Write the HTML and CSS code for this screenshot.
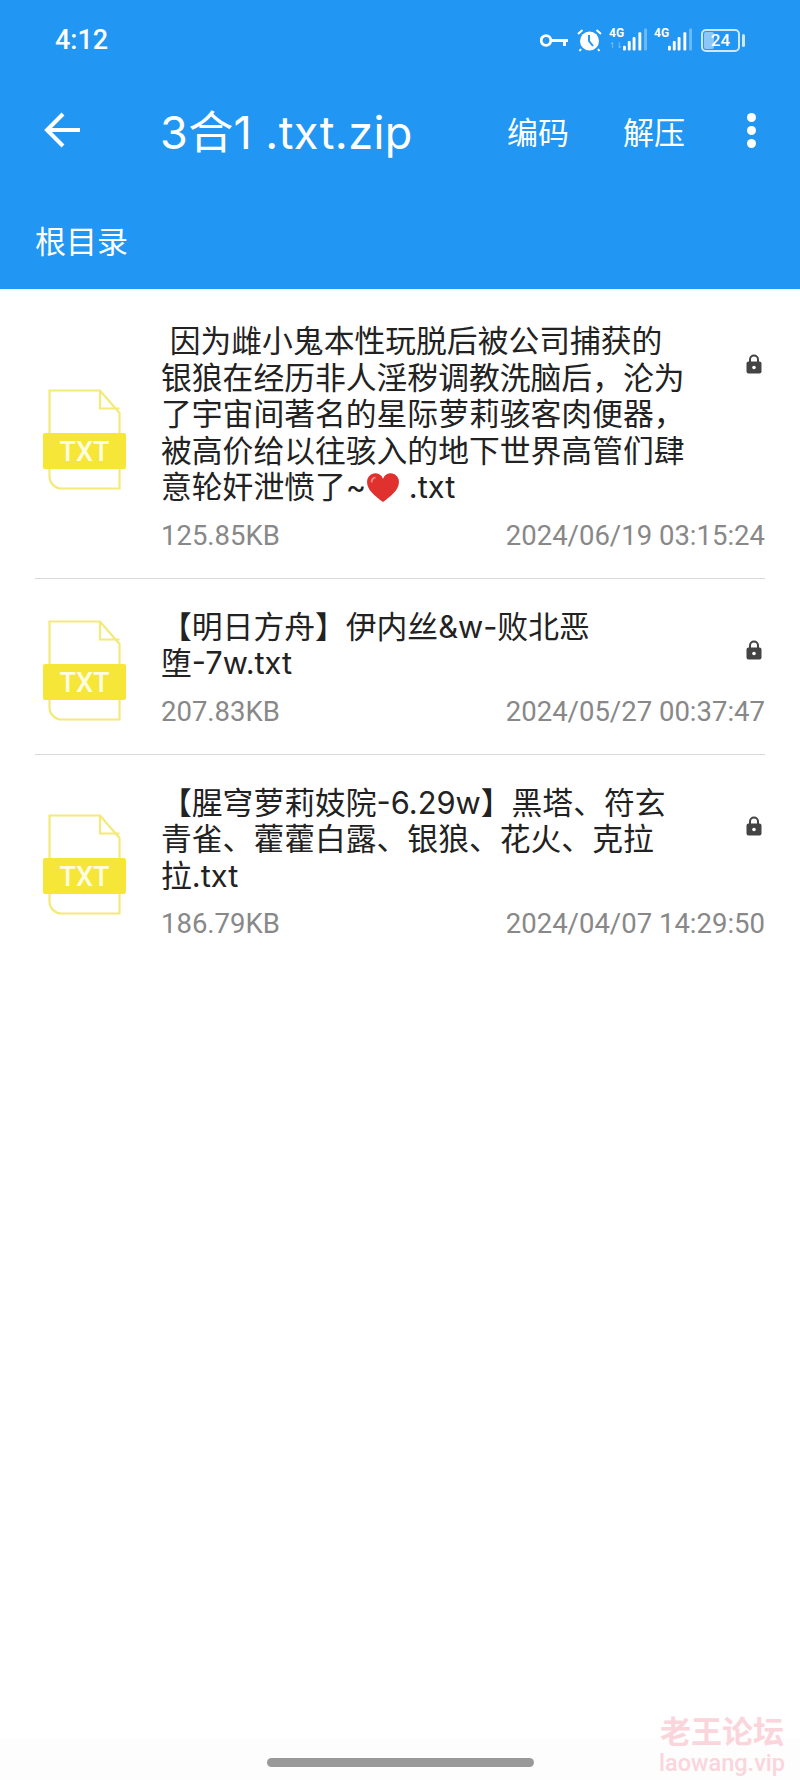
FILE: index.html
```html
<!DOCTYPE html>
<html lang="zh-CN">
<head>
    <meta charset="UTF-8">
    <meta name="viewport" content="width=device-width, initial-scale=1.0">
    <title>3合1 .txt.zip</title>
    <link rel="stylesheet" href="styles.css">
</head>
<body>
    <svg class="defs" width="0" height="0">
        <symbol id="file-txt" viewBox="0 0 83 101">
            <path d="M57 1.500H6.500V88a12 12 0 0 0 12 11.500H76.500V24L57 1.500Z" fill="none" stroke="#f3ea7a" stroke-width="2.200"/>
            <path d="M57 1.500V19.500H76.500" fill="none" stroke="#f3ea7a" stroke-width="2.200"/>
            <rect y="44" width="83" height="36" rx="2" fill="#f5e637"/>
        </symbol>
        <symbol id="lock" viewBox="0 0 16 20">
            <path d="M4 8V5.500a4 4 0 0 1 8 0V8" fill="none" stroke="#444" stroke-width="2"/>
            <rect x="0.500" y="7.500" width="15" height="12" rx="2" fill="#444"/>
            <circle cx="8" cy="13.500" r="1.800" fill="#fff"/>
        </symbol>
        <symbol id="signal" viewBox="0 0 26 23">
            <rect x="0" y="18" width="3" height="5" rx="1" fill="#fff"/>
            <rect x="5" y="13" width="3" height="10" rx="1" fill="#fff"/>
            <rect x="10" y="9" width="3" height="14" rx="1" fill="#fff"/>
            <rect x="16" y="4" width="3" height="19" rx="1" fill="#fff"/>
            <rect x="22" y="0" width="3" height="23" rx="1" fill="#fff" opacity="0.35"/>
        </symbol>
    </svg>

    <div class="screen">
        <header class="header">
            <div class="status-bar">
                <span class="clock">4:12</span>
                <div class="status-icons">
                    <svg class="icon-key" viewBox="0 0 28 13">
                        <circle cx="6" cy="6.500" r="4.800" fill="none" stroke="#fff" stroke-width="2.800"/>
                        <path d="M11 5H28V8H26V12H23V8H11Z" fill="#fff"/>
                    </svg>
                    <svg class="icon-alarm" viewBox="0 0 25 23">
                        <circle cx="12.500" cy="12" r="9.500" fill="#fff"/>
                        <path d="M12 6V12L16 17" fill="none" stroke="#2196f3" stroke-width="2"/>
                        <path d="M1 5L5.500 1M24 5L19.500 1M4 20L2.500 22M21 20L22.500 22" stroke="#fff" stroke-width="2"/>
                    </svg>
                    <div class="net">
                        <span class="net-label">4G</span>
                        <span class="net-arrows">↿⇂</span>
                        <svg class="net-bars"><use href="#signal"/></svg>
                    </div>
                    <div class="net net-second">
                        <span class="net-label">4G</span>
                        <svg class="net-bars"><use href="#signal"/></svg>
                    </div>
                    <div class="battery">
                        <div class="battery-box">
                            <span class="battery-fill"></span>
                            <span class="battery-text">24</span>
                        </div>
                        <span class="battery-nub"></span>
                    </div>
                </div>
            </div>
            <div class="toolbar">
                <svg class="back" viewBox="0 0 36 36">
                    <path d="M19 2L3 18L19 34M3 18H36" fill="none" stroke="#fff" stroke-width="4"/>
                </svg>
                <h1 class="title">3合1 .txt.zip</h1>
                <div class="actions">
                    <span class="action">编码</span>
                    <span class="action">解压</span>
                    <div class="more"><i></i><i></i><i></i></div>
                </div>
            </div>
            <div class="path">根目录</div>
        </header>

        <main class="file-list">
            <div class="file-row file-row-first">
                <svg class="file-icon" viewBox="0 0 83 101"><use href="#file-txt"/><text x="41.500" y="72" text-anchor="middle" class="file-label">TXT</text></svg>
                <div class="file-body">
                    <div class="file-top">
                        <div class="file-name">&nbsp;因为雌小鬼本性玩脱后被公司捕获的<br>银狼在经历非人淫秽调教洗脑后，沦为<br>了宇宙间著名的星际萝莉骇客肉便器，<br>被高价给以往骇入的地下世界高管们肆<br>意轮奸泄愤了~<svg class="heart" viewBox="0 0 36 32"><path d="M18 31C9 24 1 18 1 9.500A8.800 8.800 0 0 1 18 6A8.800 8.800 0 0 1 35 9.500C35 18 27 24 18 31Z" fill="#e0312f"/><path d="M6 10A4 4 0 0 1 10 5" fill="none" stroke="#f28b86" stroke-width="2"/></svg> .txt</div>
                        <svg class="lock"><use href="#lock"/></svg>
                    </div>
                    <div class="file-meta"><span>125.85KB</span><span>2024/06/19 03:15:24</span></div>
                </div>
            </div>
            <div class="file-row">
                <svg class="file-icon" viewBox="0 0 83 101"><use href="#file-txt"/><text x="41.500" y="72" text-anchor="middle" class="file-label">TXT</text></svg>
                <div class="file-body">
                    <div class="file-top">
                        <div class="file-name">【明日方舟】伊内丝&amp;w-败北恶<br>堕-7w.txt</div>
                        <svg class="lock"><use href="#lock"/></svg>
                    </div>
                    <div class="file-meta"><span>207.83KB</span><span>2024/05/27 00:37:47</span></div>
                </div>
            </div>
            <div class="file-row">
                <svg class="file-icon" viewBox="0 0 83 101"><use href="#file-txt"/><text x="41.500" y="72" text-anchor="middle" class="file-label">TXT</text></svg>
                <div class="file-body">
                    <div class="file-top">
                        <div class="file-name">【腥穹萝莉妓院-6.29w】黑塔、符玄<br>青雀、藿藿白露、银狼、花火、克拉<br>拉.txt</div>
                        <svg class="lock"><use href="#lock"/></svg>
                    </div>
                    <div class="file-meta"><span>186.79KB</span><span>2024/04/07 14:29:50</span></div>
                </div>
            </div>
        </main>

        <div class="home-area"><span class="home-bar"></span></div>
        <div class="watermark">
            <div class="watermark-cn">老王论坛</div>
            <div class="watermark-en">laowang.vip</div>
        </div>
    </div>
</body>
</html>
```

FILE: styles.css
```css
* {
    box-sizing: border-box;
}
html, body {
    margin: 0;
    padding: 0;
}
body {
    font-family: Inter, "Noto Sans CJK SC", sans-serif;
    background: #fff;
    color: #222;
}
.defs {
    position: absolute;
}
.file-label {
    font-family: Roboto, sans-serif;
    font-size: 27px;
    font-weight: 500;
    fill: #fffde0;
}
.screen {
    position: relative;
    width: 800px;
    height: 1780px;
    display: flex;
    flex-direction: column;
    overflow: hidden;
}

/* blue header */
.header {
    height: 289px;
    background: #2196f3;
    color: #fff;
}
.status-bar {
    height: 80px;
    display: flex;
    align-items: center;
    justify-content: space-between;
    padding: 0 55px;
}
.clock {
    font-family: Roboto, sans-serif;
    font-size: 27px;
    font-weight: 500;
}
.status-icons {
    display: flex;
    align-items: center;
}
.icon-key {
    width: 28px;
    height: 13px;
    margin-right: 9px;
}
.icon-alarm {
    width: 25px;
    height: 23px;
    margin-right: 7px;
}
.net {
    position: relative;
    width: 38px;
    height: 24px;
    margin-right: 7px;
}
.net-label {
    position: absolute;
    left: 0;
    top: -1px;
    font-family: Roboto, sans-serif;
    font-size: 12px;
    font-weight: 700;
    line-height: 12px;
}
.net-arrows {
    position: absolute;
    left: 0;
    top: 13px;
    font-family: "DejaVu Sans", sans-serif;
    font-size: 8px;
    line-height: 9px;
    opacity: 0.5;
}
.net-bars {
    position: absolute;
    right: -1px;
    top: 0;
    width: 25px;
    height: 23px;
}
.net-second {
    margin-right: 9px;
}
.battery {
    display: flex;
    align-items: center;
    gap: 2px;
}
.battery-box {
    position: relative;
    width: 39px;
    height: 23px;
    border: 2px solid #cfe6fb;
    border-radius: 5px;
    display: flex;
    align-items: center;
    justify-content: center;
}
.battery-fill {
    position: absolute;
    left: 1px;
    top: 1px;
    bottom: 1px;
    width: 10px;
    background: #8cc7f8;
    border-radius: 2px;
}
.battery-text {
    position: relative;
    font-family: Roboto, sans-serif;
    font-size: 17px;
    font-weight: 500;
}
.battery-nub {
    width: 3px;
    height: 13px;
    background: #cfe6fb;
    border-radius: 2px;
}
.toolbar {
    height: 100px;
    display: flex;
    align-items: center;
    padding-left: 44px;
}
.back {
    width: 36px;
    height: 36px;
}
.title {
    margin: -2px 0 0 80px;
    font-size: 45px;
    font-weight: 400;
    letter-spacing: 0.4px;
}
.actions {
    margin-left: auto;
    display: flex;
    align-items: center;
}
.action {
    font-size: 31px;
    margin-right: 54px;
}
.action + .action {
    margin-right: 62px;
}
.more {
    display: flex;
    flex-direction: column;
    gap: 4px;
    margin-right: 44px;
}
.more i {
    display: block;
    width: 9px;
    height: 9px;
    background: #fff;
    border-radius: 50%;
}
.path {
    padding: 42px 0 0 35px;
    font-size: 31px;
    line-height: 40px;
}

/* file rows */
.file-list {
    flex: 1;
    padding: 0 35px;
}
.file-row {
    display: flex;
    align-items: center;
    padding: 30px 0 24px;
    border-bottom: 1px solid #d9d9d9;
}
.file-row:last-child {
    border-bottom: none;
}
.file-row-first {
    padding-top: 34px;
}
.file-icon {
    width: 83px;
    height: 101px;
    flex-shrink: 0;
    margin: 3px 0 0 8px;
}
.file-body {
    flex: 1;
    margin-left: 35px;
}
.file-top {
    display: flex;
    justify-content: space-between;
    align-items: flex-start;
}
.file-name {
    font-size: 30.800px;
    line-height: 36.500px;
    white-space: nowrap;
}
.heart {
    width: 34px;
    height: 30px;
    vertical-align: -5px;
    margin: 0;
}
.lock {
    width: 16px;
    height: 20px;
    margin: 31px 3px 0 0;
}
.file-meta {
    display: flex;
    justify-content: space-between;
    margin-top: 12px;
    font-family: Roboto, sans-serif;
    font-size: 27.500px;
    line-height: 36px;
    color: #888;
}

/* bottom */
.home-area {
    height: 42px;
    display: flex;
    justify-content: center;
    padding: 20px 0 0 0;
    background: #fdfdfd;
}
.home-bar {
    width: 267px;
    height: 9px;
    background: #999;
    border-radius: 5px;
}
.watermark {
    position: absolute;
    right: 15px;
    bottom: 4px;
    color: #fbd5dc;
    text-align: center;
    font-family: "Noto Sans CJK SC", sans-serif;
}
.watermark-cn {
    font-size: 31px;
    font-weight: 700;
    line-height: 40px;
}
.watermark-en {
    font-family: Roboto, sans-serif;
    font-size: 23.500px;
    font-weight: 500;
    line-height: 26px;
}
```
